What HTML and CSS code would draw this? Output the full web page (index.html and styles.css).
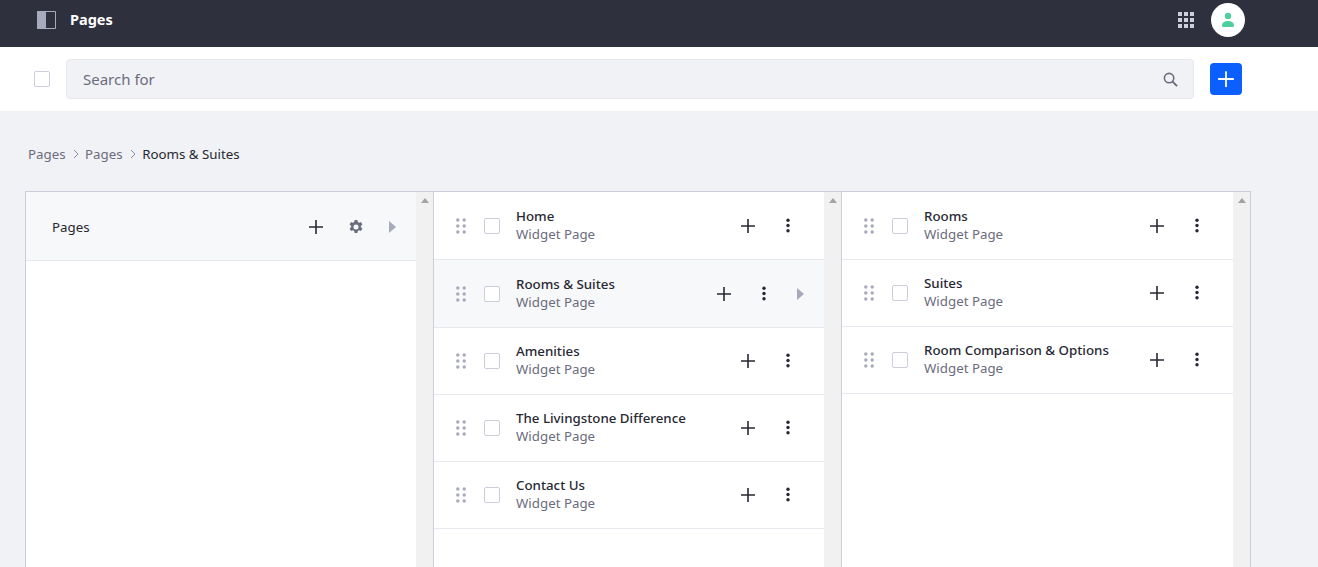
FILE: index.html
```html
<!DOCTYPE html>
<html>
<head>
    <title>Pages</title>
    <meta charset="UTF-8">
    <link rel="stylesheet" href="styles.css">
</head>
<body>
    <svg class="defs" width="0" height="0">
        <symbol id="plus" viewBox="0 0 16 16"><path d="M8 1v14M1 8h14" fill="none" stroke="currentColor" stroke-width="1.6"/></symbol>
        <symbol id="dots" viewBox="0 0 4 16"><circle cx="2" cy="2.2" r="1.7"/><circle cx="2" cy="7.5" r="1.7"/><circle cx="2" cy="12.8" r="1.7"/></symbol>
        <symbol id="grip" viewBox="0 0 10 16"><circle cx="1.8" cy="2" r="1.7"/><circle cx="8.2" cy="2" r="1.7"/><circle cx="1.8" cy="8" r="1.7"/><circle cx="8.2" cy="8" r="1.7"/><circle cx="1.8" cy="14" r="1.7"/><circle cx="8.2" cy="14" r="1.7"/></symbol>
    </svg>

    <header class="topbar">
        <svg class="panel_icon" viewBox="0 0 19 18"><rect width="9" height="18" fill="#a7a9bc"/><path d="M9 .5h9.5v17H9" fill="none" stroke="#a7a9bc"/></svg>
        <h1>Pages</h1>
        <svg class="apps_icon" viewBox="0 0 16 16" fill="#cdced9">
            <rect width="4" height="4"/><rect x="6" width="4" height="4"/><rect x="12" width="4" height="4"/>
            <rect y="6" width="4" height="4"/><rect x="6" y="6" width="4" height="4"/><rect x="12" y="6" width="4" height="4"/>
            <rect y="12" width="4" height="4"/><rect x="6" y="12" width="4" height="4"/><rect x="12" y="12" width="4" height="4"/>
        </svg>
        <div class="avatar">
            <svg viewBox="0 0 14 16" fill="#4fcf9f"><circle cx="7" cy="4" r="3.2"/><path d="M1 13.5C1 10.5 3.500 9 7 9s6 1.500 6 4.500c0 1-1 1.500-2 1.500H3c-1 0-2-.5-2-1.500z"/></svg>
        </div>
    </header>

    <div class="toolbar">
        <span class="check"></span>
        <div class="search">
            <span>Search for</span>
            <svg viewBox="0 0 16 16" fill="none" stroke="#6b6c7e" stroke-width="1.700"><circle cx="6.500" cy="6.500" r="5"/><path d="M10.200 10.200l4.800 4.800" stroke-width="2"/></svg>
        </div>
        <button class="add_btn"><svg viewBox="0 0 16 16"><use href="#plus"/></svg></button>
    </div>

    <nav class="crumbs">
        <a>Pages</a>
        <svg viewBox="0 0 6 10"><path d="M1 1l4 4-4 4" fill="none" stroke="#8f90a3"/></svg>
        <a>Pages</a>
        <svg viewBox="0 0 6 10"><path d="M1 1l4 4-4 4" fill="none" stroke="#8f90a3"/></svg>
        <span>Rooms &amp; Suites</span>
    </nav>

    <main class="miller">
        <section class="col">
            <div class="col_list">
                <div class="col_head">
                    <strong>Pages</strong>
                    <svg class="plus" viewBox="0 0 16 16"><use href="#plus"/></svg>
                    <svg class="gear" viewBox="0 0 16 16"><path fill="#6b6c7e" fill-rule="evenodd" d="M6.600.5h2.800l.4 2 1.300.7 1.900-.7 1.400 2.400-1.500 1.300v1.600l1.500 1.300-1.400 2.400-1.900-.7-1.300.7-.4 2H6.600l-.4-2-1.300-.7-1.900.7L1.600 9.100l1.500-1.300V6.200L1.600 4.900 3 2.500l1.900.7 1.300-.7zM8 5a2.500 2.500 0 1 0 0 5 2.500 2.500 0 0 0 0-5z" transform="translate(0 .5)"/></svg>
                    <svg class="arrow" viewBox="0 0 7 12"><path d="M0 0l7 6-7 6z"/></svg>
                </div>
            </div>
            <div class="scroll"><i></i></div>
        </section>

        <section class="col">
            <div class="col_list">
                <div class="row first">
                    <svg class="grip"><use href="#grip"/></svg><span class="check"></span>
                    <div class="info"><b>Home</b><span>Widget Page</span></div>
                    <svg class="plus" viewBox="0 0 16 16"><use href="#plus"/></svg><svg class="dots"><use href="#dots"/></svg>
                </div>
                <div class="row active">
                    <svg class="grip"><use href="#grip"/></svg><span class="check"></span>
                    <div class="info"><b>Rooms &amp; Suites</b><span>Widget Page</span></div>
                    <svg class="plus" viewBox="0 0 16 16"><use href="#plus"/></svg><svg class="dots"><use href="#dots"/></svg>
                    <svg class="arrow" viewBox="0 0 7 12"><path d="M0 0l7 6-7 6z"/></svg>
                </div>
                <div class="row">
                    <svg class="grip"><use href="#grip"/></svg><span class="check"></span>
                    <div class="info"><b>Amenities</b><span>Widget Page</span></div>
                    <svg class="plus" viewBox="0 0 16 16"><use href="#plus"/></svg><svg class="dots"><use href="#dots"/></svg>
                </div>
                <div class="row">
                    <svg class="grip"><use href="#grip"/></svg><span class="check"></span>
                    <div class="info"><b>The Livingstone Difference</b><span>Widget Page</span></div>
                    <svg class="plus" viewBox="0 0 16 16"><use href="#plus"/></svg><svg class="dots"><use href="#dots"/></svg>
                </div>
                <div class="row">
                    <svg class="grip"><use href="#grip"/></svg><span class="check"></span>
                    <div class="info"><b>Contact Us</b><span>Widget Page</span></div>
                    <svg class="plus" viewBox="0 0 16 16"><use href="#plus"/></svg><svg class="dots"><use href="#dots"/></svg>
                </div>
            </div>
            <div class="scroll"><i></i></div>
        </section>

        <section class="col last">
            <div class="col_list">
                <div class="row first">
                    <svg class="grip"><use href="#grip"/></svg><span class="check"></span>
                    <div class="info"><b>Rooms</b><span>Widget Page</span></div>
                    <svg class="plus" viewBox="0 0 16 16"><use href="#plus"/></svg><svg class="dots"><use href="#dots"/></svg>
                </div>
                <div class="row">
                    <svg class="grip"><use href="#grip"/></svg><span class="check"></span>
                    <div class="info"><b>Suites</b><span>Widget Page</span></div>
                    <svg class="plus" viewBox="0 0 16 16"><use href="#plus"/></svg><svg class="dots"><use href="#dots"/></svg>
                </div>
                <div class="row">
                    <svg class="grip"><use href="#grip"/></svg><span class="check"></span>
                    <div class="info"><b>Room Comparison &amp; Options</b><span>Widget Page</span></div>
                    <svg class="plus" viewBox="0 0 16 16"><use href="#plus"/></svg><svg class="dots"><use href="#dots"/></svg>
                </div>
            </div>
            <div class="scroll"><i></i></div>
        </section>
    </main>
</body>
</html>
```

FILE: styles.css
```css
html, body{
    height: 100%;
    overflow: hidden;
}
body{
    margin: 0;
    background: #f1f2f5;
    color: #272833;
    font-family: "Noto Sans", "Open Sans", sans-serif;
    font-size: 13.3px;
}
.defs{
    display: block;
    height: 0;
}

/* top bar */
.topbar{
    height: 47px;
    background: #2e303e;
    display: flex;
    align-items: center;
    padding: 0 73px 8px 37px;
    box-sizing: border-box;
}
.panel_icon{
    width: 19px;
    height: 18px;
    margin-right: 14px;
}
.topbar h1{
    margin: 0 0 2px;
    flex: 1;
    color: #fff;
    font-size: 14.5px;
    font-weight: 700;
}
.apps_icon{
    width: 16px;
    height: 16px;
    margin-right: 17px;
}
.avatar{
    width: 34px;
    height: 34px;
    border-radius: 50%;
    background: #fff;
    display: flex;
    align-items: center;
    justify-content: center;
}
.avatar svg{
    width: 14px;
    height: 16px;
}

/* toolbar */
.toolbar{
    height: 64px;
    background: #fff;
    display: flex;
    align-items: center;
    padding: 0 76px 0 34px;
    box-sizing: border-box;
}
.check{
    width: 16px;
    height: 16px;
    flex: none;
    background: #fff;
    border: 1px solid #cdced9;
    border-radius: 2px;
    box-sizing: border-box;
}
.search{
    flex: 1;
    height: 40px;
    margin: 0 16px;
    padding: 0 15px 0 16px;
    background: #f1f2f5;
    border: 1px solid #e7e7ed;
    border-radius: 4px;
    box-sizing: border-box;
    display: flex;
    align-items: center;
    justify-content: space-between;
    color: #6b6c7e;
    font-size: 15px;
}
.search svg{
    width: 15px;
    height: 15px;
}
.add_btn{
    width: 32px;
    height: 32px;
    padding: 0;
    border: 0;
    border-radius: 4px;
    background: #0b5fff;
    color: #fff;
    display: flex;
    align-items: center;
    justify-content: center;
}
.add_btn svg{
    width: 18px;
    height: 18px;
}

/* breadcrumb */
.crumbs{
    display: flex;
    align-items: center;
    height: 20px;
    margin: 33px 0 27px 28px;
    color: #6b6c7e;
}
.crumbs svg{
    width: 6px;
    height: 10px;
    margin: 0 6.500px 0 7px;
}
.crumbs span{
    color: #272833;
}

/* columns */
.miller{
    display: flex;
    margin-left: 25px;
    width: 1226px;
    height: 400px;
    border-top: 1px solid #cdced9;
    border-left: 1px solid #cdced9;
    box-sizing: border-box;
}
.col{
    display: flex;
    width: 408px;
    border-right: 1px solid #cdced9;
    box-sizing: border-box;
}
.col.last{
    flex: 1;
    width: auto;
}
.col_list{
    flex: 1;
    background: #fff;
}
.scroll{
    width: 17px;
    background: #f1f1f1;
    display: flex;
    justify-content: center;
    padding-top: 6px;
    box-sizing: border-box;
}
.scroll i{
    width: 0;
    height: 0;
    border: 4px solid transparent;
    border-top: 0;
    border-bottom: 5px solid #a3a3a3;
}
.col_head{
    height: 69px;
    display: flex;
    align-items: center;
    padding: 2px 0 0 26px;
    background: #f7f8f9;
    border-bottom: 1px solid #e7e7ed;
    box-sizing: border-box;
}
.col_head strong{
    flex: 1;
    font-weight: 400;
}
.col_head .gear{
    width: 16px;
    height: 16px;
    margin-left: 24px;
}
.col_head .arrow{
    margin-left: 25px;
    margin-right: 20px;
}
.plus{
    width: 16px;
    height: 16px;
    color: #272833;
    flex: none;
}
.arrow{
    width: 7px;
    height: 12px;
    flex: none;
    fill: #a7a9bc;
}

/* rows */
.row{
    height: 67px;
    display: flex;
    align-items: center;
    padding: 0 34px 1px 22px;
    border-bottom: 1px solid #e7e7ed;
    box-sizing: border-box;
}
.row.first{
    height: 68px;
    padding-top: 1px;
}
.row.active{
    height: 68px;
    padding-top: 1px;
    background: #f7f8f9;
    padding-right: 20px;
}
.row.active .arrow{
    margin-left: 31px;
}
.grip{
    width: 10px;
    height: 16px;
    flex: none;
    fill: #a7a9bc;
    margin-right: 18px;
}
.info{
    flex: 1;
    margin: 0 0 2px 16px;
    display: flex;
    flex-direction: column;
    line-height: 18px;
    color: #6b6c7e;
}
.info b{
    color: #272833;
    font-weight: 500;
}
.dots{
    width: 4px;
    height: 16px;
    flex: none;
    fill: #272833;
    margin-left: 30px;
}
```
